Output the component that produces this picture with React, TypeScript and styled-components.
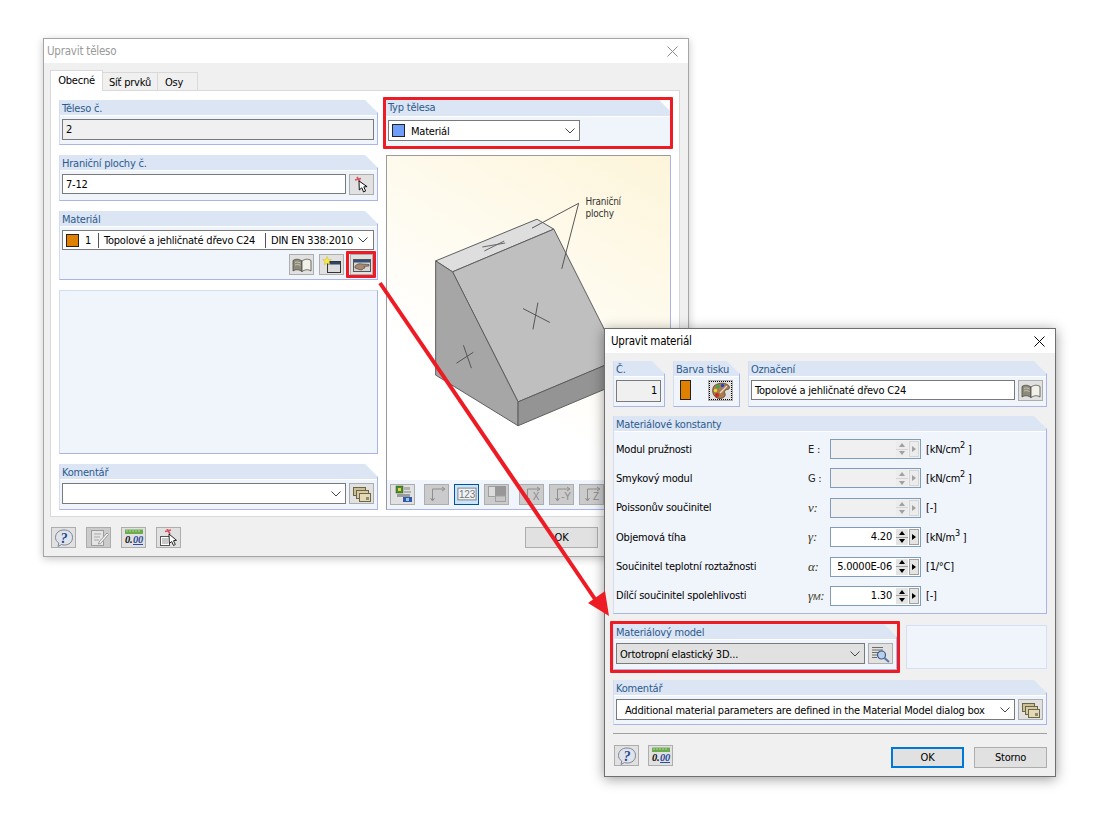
import React from "react";
import styled, { createGlobalStyle } from "styled-components";

const UI_FONT = `"DejaVu Sans Condensed", "DejaVu Sans", "Liberation Sans", sans-serif`;

const GlobalStyle = createGlobalStyle`
  html, body {
    margin: 0;
    padding: 0;
    background: #fff;
  }
  body {
    font-family: ${UI_FONT};
    font-stretch: condensed;
    font-size: 11px;
    letter-spacing: -0.22px;
    color: #000;
  }
`;

const Canvas = styled.div`
  position: relative;
  width: 1100px;
  height: 825px;
  overflow: hidden;
  background: #fff;
`;

const Window = styled.div<{ $x: number; $y: number; $w: number; $h: number; $active?: boolean }>`
  position: absolute;
  left: ${(p) => p.$x}px;
  top: ${(p) => p.$y}px;
  width: ${(p) => p.$w}px;
  height: ${(p) => p.$h}px;
  box-sizing: border-box;
  display: flex;
  flex-direction: column;
  background: #f0f0f0;
  border: 1px solid ${(p) => (p.$active ? "#6f6f6f" : "#a5a5a5")};
  box-shadow: ${(p) => (p.$active ? "0 2px 12px rgba(0,0,0,.4)" : "0 2px 8px rgba(0,0,0,.22)")};
`;

const TitleBar = styled.div<{ $active?: boolean }>`
  flex: none;
  height: 24px;
  display: flex;
  align-items: center;
  justify-content: space-between;
  padding: 0 10px 0 ${(p) => (p.$active ? 6 : 3)}px;
  background: #fff;
  color: ${(p) => (p.$active ? "#000" : "#9a9a9a")};
  font-size: 11.5px;
`;

const Tabs = styled.div`
  display: flex;
  height: 21px;
  margin: 7px 0 0 6px;
  align-items: flex-end;
`;

const Tab = styled.div<{ $on?: boolean; $w: number; $shift?: number }>`
  box-sizing: border-box;
  width: ${(p) => p.$w}px;
  height: ${(p) => (p.$on ? 21 : 19)}px;
  display: flex;
  align-items: center;
  justify-content: center;
  padding: ${(p) => (p.$on ? "0 0 1px" : "1px 0 0")};
  padding-right: ${(p) => p.$shift ?? 0}px;
  background: ${(p) => (p.$on ? "#fff" : "#f0f0f0")};
  border: 1px solid #d9d9d9;
  border-bottom: ${(p) => (p.$on ? "none" : "1px solid #d9d9d9")};
  border-left: ${(p) => (p.$on ? "1px solid #d9d9d9" : "none")};
  position: relative;
  z-index: ${(p) => (p.$on ? 1 : 0)};
`;

const TabPage = styled.div`
  box-sizing: border-box;
  width: 630px;
  height: 427px;
  margin: -1px 0 0 6px;
  padding: 9px 8px 0;
  display: grid;
  grid-template-columns: 319px 286px;
  column-gap: 7px;
  background: #fff;
  border: 1px solid #d9d9d9;
`;

const Col = styled.div`
  display: flex;
  flex-direction: column;
  gap: 10px;
`;

const RightCol = styled(Col)`
  margin-top: -1px;
  gap: 8px;
`;

const Panel = styled.div<{ $w?: number; $h?: number; $plain?: boolean }>`
  box-sizing: border-box;
  flex: none;
  width: ${(p) => (p.$w ? `${p.$w}px` : "auto")};
  height: ${(p) => (p.$h ? `${p.$h}px` : "auto")};
  display: flex;
  flex-direction: column;
  background: #f0f4fb;
  border-right: 1px solid #aab4e6;
  border-bottom: 1px solid #aab4e6;
  border-left: 1px solid #d4dcf2;
  ${(p) =>
    p.$plain
      ? "border-top: 1px solid #d4dcf2;"
      : "clip-path: polygon(0 0, calc(100% - 13px) 0, 100% 13px, 100% 100%, 0 100%);"}
`;

const SoftPanel = styled.div`
  box-sizing: border-box;
  width: 141px;
  height: 44px;
  margin-top: 1px;
  background: #f0f4fb;
  border: 1px solid #d5dff6;
`;

const PanelHead = styled.div<{ $h?: number }>`
  flex: none;
  box-sizing: border-box;
  height: ${(p) => (p.$h ?? 15) + 1}px;
  line-height: 15px;
  padding: 1px 0 0 2px;
  background: #dbe5f4;
  border-bottom: 1px solid #fff;
  color: #2c5a8e;
`;

const PanelBody = styled.div`
  flex: 1;
  display: flex;
  flex-direction: column;
  gap: 4px;
  padding: 3px 3px 4px 2px;
`;

const Row = styled.div`
  display: flex;
  align-items: flex-start;
  gap: 3px;
`;

const ActionRow = styled(Row)`
  justify-content: flex-end;
  gap: 5px;
  padding-right: 1px;
`;

const TextBox = styled.div<{ $ro?: boolean; $right?: boolean }>`
  box-sizing: border-box;
  flex: 1;
  min-width: 0;
  height: 20px;
  line-height: 19px;
  padding: 0 3px;
  overflow: hidden;
  white-space: nowrap;
  text-align: ${(p) => (p.$right ? "right" : "left")};
  background: ${(p) => (p.$ro ? "#f0f0f0" : "#fff")};
  border: 1px solid #7a7a7a;
`;

const Combo = styled.div<{ $w?: number; $gray?: boolean }>`
  box-sizing: border-box;
  flex: ${(p) => (p.$w ? "none" : "1")};
  width: ${(p) => (p.$w ? `${p.$w}px` : "auto")};
  min-width: 0;
  height: 21px;
  display: flex;
  align-items: center;
  padding-left: 3px;
  background: ${(p) => (p.$gray ? "#e1e1e1" : "#fff")};
  border: 1px solid #7a7a7a;
  white-space: nowrap;
  overflow: hidden;
`;

const ComboText = styled.span<{ $indent?: number }>`
  flex: 1;
  min-width: 0;
  overflow: hidden;
  padding: 1px 0 0 ${(p) => p.$indent ?? 0}px;
`;

const Swatch = styled.span<{ $color: string; $w?: number; $h?: number }>`
  flex: none;
  box-sizing: border-box;
  display: block;
  width: ${(p) => p.$w ?? 13}px;
  height: ${(p) => p.$h ?? 13}px;
  background: ${(p) => p.$color};
  border: 1px solid #222;
`;

const ComboCell = styled.span<{ $w: number }>`
  flex: none;
  box-sizing: border-box;
  width: ${(p) => p.$w}px;
  height: 15px;
  line-height: 16px;
  overflow: hidden;
  padding-left: 5px;
  border-left: 1px solid #555;
`;

const Num = styled.span`
  flex: none;
  width: 13px;
  margin-left: 6px;
  padding-top: 1px;
  text-align: left;
`;

const Chevron = styled.svg`
  flex: none;
  width: 10px;
  height: 6px;
  margin: 0 4px;
`;

const IconButton = styled.div<{ $w?: number; $h?: number; $tone?: "off" | "on" | "focus"; $gap?: number }>`
  flex: none;
  box-sizing: border-box;
  width: ${(p) => p.$w ?? 25}px;
  height: ${(p) => p.$h ?? 21}px;
  margin-left: ${(p) => p.$gap ?? 0}px;
  display: flex;
  align-items: center;
  justify-content: center;
  background: ${(p) => (p.$tone === "off" ? "#cbcbcb" : p.$tone === "on" ? "#cce4f7" : "#e1e1e1")};
  border: ${(p) => (p.$tone === "on" ? "1px solid #005499" : "1px solid #adadad")};
  outline: ${(p) => (p.$tone === "focus" ? "1px dotted #000" : "none")};
  outline-offset: -2px;
`;

const Highlight = styled.div<{ $inset: number }>`
  position: relative;
  flex: none;
  &::after {
    content: "";
    position: absolute;
    inset: ${(p) => p.$inset}px;
    border: 3px solid #ed1c24;
    border-radius: 1px;
    pointer-events: none;
  }
`;

const Preview = styled.div`
  height: 325px;
  box-sizing: border-box;
  margin: 0 0 -8px 1px;
  background: linear-gradient(30deg, #ffffff 30%, #fdf5da 100%);
  border-top: 1px solid #9a9a9a;
  border-left: 1px solid #9a9a9a;
  border-right: 1px solid #aab4e6;
`;

const PreviewSvg = styled.svg`
  display: block;
  width: 100%;
  height: 100%;
`;

const PreviewTools = styled.div`
  height: 30px;
  box-sizing: border-box;
  margin-left: 1px;
  display: flex;
  align-items: center;
  gap: 5px;
  padding: 0 0 1px 3px;
  background: #f0f4fb;
  border-bottom: 1px solid #aab4e6;
  border-left: 1px solid #9a9a9a;
  border-right: 1px solid #aab4e6;
`;

const BottomBar = styled.div`
  flex: 1;
  display: flex;
  align-items: flex-start;
  padding: 10px 0 0 7px;
  gap: 10px;
`;

const DialogButton = styled.div<{ $default?: boolean }>`
  box-sizing: border-box;
  width: 73px;
  height: 21px;
  display: flex;
  align-items: center;
  justify-content: center;
  background: #e1e1e1;
  border: ${(p) => (p.$default ? "2px solid #0078d7" : "1px solid #adadad")};
`;

const BehindOk = styled(DialogButton)`
  margin-left: 334px;
`;

const DialogBody = styled.div`
  flex: 1;
  display: flex;
  flex-direction: column;
  padding: 8px 8px 0;
`;

const TopRow = styled.div`
  display: flex;
  gap: 8px;
  height: 46px;
`;

const ColorRow = styled.div`
  display: flex;
  justify-content: space-between;
  padding: 0 3px 0 4px;
`;

const ConstGrid = styled.div`
  display: grid;
  grid-template-columns: 192px 22px 91px auto;
  grid-auto-rows: 20px;
  row-gap: 9.4px;
  align-items: center;
  padding: 7px 0 0 2px;
`;

const Symbol = styled.span`
  white-space: nowrap;
  color: #222;
`;

const GreekSym = styled.span`
  font-family: "Liberation Serif", serif;
  font-style: italic;
  font-size: 13px;
  color: #3a3a20;
`;

const Sub = styled.span`
  font-size: 9px;
  font-family: "Liberation Sans", sans-serif;
`;

const Sup = styled.sup`
  font-size: 9px;
  line-height: 0;
`;

const Unit = styled.span`
  padding-left: 5px;
  white-space: nowrap;
`;

const Spinner = styled.div<{ $off?: boolean }>`
  box-sizing: border-box;
  height: 20px;
  display: flex;
  align-items: stretch;
  padding: 1px;
  background: ${(p) => (p.$off ? "#f0f0f0" : "#fff")};
  border: 1px solid #7f9db9;
`;

const SpinValue = styled.span`
  flex: 1;
  min-width: 0;
  text-align: right;
  white-space: nowrap;
  padding-right: 4px;
  line-height: 16px;
`;

const SpinArrows = styled.span<{ $off?: boolean }>`
  flex: none;
  width: 12px;
  display: flex;
  flex-direction: column;
  gap: 1px;
  background: ${(p) => (p.$off ? "#d5d5d5" : "#a0a0a0")};
  color: ${(p) => (p.$off ? "#a0a0a0" : "#000")};
`;

const SpinCell = styled.span<{ $off?: boolean }>`
  flex: 1;
  background: ${(p) => (p.$off ? "#ececec" : "#e4e4e4")};
  display: flex;
  align-items: center;
  justify-content: center;
`;

const SpinNext = styled.span<{ $off?: boolean }>`
  flex: none;
  box-sizing: border-box;
  width: 10px;
  margin-left: 1px;
  display: flex;
  align-items: center;
  justify-content: center;
  background: ${(p) => (p.$off ? "#ececec" : "#e4e4e4")};
  border: 1px solid ${(p) => (p.$off ? "#d5d5d5" : "#a0a0a0")};
  color: ${(p) => (p.$off ? "#a0a0a0" : "#000")};
`;

const Tri = styled.svg`
  display: block;
  width: 6px;
  height: 6px;
  fill: currentColor;
`;

const ModelRow = styled.div`
  display: flex;
  gap: 9px;
  margin-top: 10px;
`;

const Separator = styled.div`
  height: 1px;
  margin-top: 8px;
  background: #a0a0a0;
`;

const DialogFooter = styled.div`
  display: flex;
  align-items: flex-start;
  gap: 9px;
  margin-top: 11px;
  padding-left: 1px;
`;

const FooterRight = styled.div`
  margin-left: auto;
  display: flex;
  gap: 10px;
  margin-top: 2px;
`;

const MarginWrap = styled.div<{ $top: number }>`
  margin-top: ${(p) => p.$top}px;
`;

const ArrowLayer = styled.svg`
  position: absolute;
  left: 0;
  top: 0;
  width: 1100px;
  height: 825px;
  pointer-events: none;
`;

const Ico = styled.svg`
  display: block;
  width: 20px;
  height: 18px;
`;

const CloseX = ({ color }: { color: string }) => (
  <svg width="11" height="11" viewBox="0 0 11 11">
    <path d="M.5.5l10 10M10.5.5l-10 10" stroke={color} strokeWidth="1" fill="none" />
  </svg>
);

const Down = () => (
  <Chevron viewBox="0 0 10 6">
    <path d="M.5.5L5 5 9.500.5" stroke="#444" fill="none" />
  </Chevron>
);

const BookIcon = () => (
  <Ico viewBox="0 0 20 18">
    <path d="M1 4.500C4 2.500 7 3 10 5v10.500C7 13.500 4 13 1 15z" fill="#8d8a7c" stroke="#4a4a44" strokeWidth=".8" />
    <path d="M19 4.500C16 2.500 13 3 10 5v10.500c3-2 6-2.500 9-.5z" fill="#f2f1e8" stroke="#4a4a44" strokeWidth=".8" />
    <path d="M3 6.500c2-.8 3.500-.5 5.500 .5M3 9c2-.8 3.500-.5 5.500 .5" stroke="#d9d6c6" strokeWidth=".8" fill="none" />
  </Ico>
);

const NewWindowIcon = () => (
  <Ico viewBox="0 0 20 18">
    <rect x="5.500" y="5.500" width="13" height="11" fill="#dcdcdc" stroke="#333" />
    <rect x="6" y="6" width="12" height="2.500" fill="#2b4468" />
    <path d="M5 .5l1.300 2.900 3.100.3-2.400 2 .8 3.100L5 7.100 2.200 8.800 3 5.700.6 3.700l3.100-.3z" fill="#f7e94a" stroke="#c9b93a" strokeWidth=".5" />
  </Ico>
);

const HandWindowIcon = () => (
  <Ico viewBox="0 0 20 18">
    <rect x="1.500" y="3.500" width="17" height="12" fill="#d6d6d6" stroke="#555" />
    <rect x="2" y="4" width="16" height="2.500" fill="#33507c" />
    <path d="M3 10c2.500-2.500 5-2.500 7-2l7 .5v1.500l-5 .5 1 1.500-2 .5-1 1.500-3-.5-4-1.500z" fill="#a88a72" stroke="#4d3a2a" strokeWidth=".6" />
  </Ico>
);

const PickIcon = () => (
  <Ico viewBox="0 0 20 18">
    <path d="M3 4l6-1.500M5 1l3 5" stroke="#d95060" strokeWidth="1.600" />
    <path d="M7 5l.3 9 2.500-2.200 1.800 4.200 2-1-1.800-4.100 3.300-.3z" fill="#fff" stroke="#111" strokeWidth="1" />
  </Ico>
);

const HelpIcon = () => (
  <Ico viewBox="0 0 20 18">
    <path d="M10 1c5 0 8.500 3 8.500 7.500S15 16 10.500 16c-1 0-2 0-3-.5L4 17.500l.8-3.500C2.500 12.500 1.500 10.500 1.500 8.500 1.500 4 5 1 10 1z" fill="#dfe3ec" stroke="#7f8596" />
    <text x="10" y="13.500" textAnchor="middle" fontFamily="Liberation Serif, serif" fontWeight="700" fontStyle="italic" fontSize="14" fill="#23468c">?</text>
  </Ico>
);

const NoteIcon = () => (
  <Ico viewBox="0 0 20 18">
    <rect x="2.500" y="1.500" width="12" height="15" fill="#e4e4e4" stroke="#9c9c9c" />
    <path d="M5 5h7M5 8h6M5 11h5" stroke="#a9a9a9" />
    <path d="M10 13l8-9 1.500 1.500-8 9-2 .5z" fill="#f2f2f2" stroke="#9c9c9c" />
  </Ico>
);

const DecimalIcon = () => (
  <Ico viewBox="0 0 20 18">
    <rect x="1" y="0.500" width="18" height="4.500" fill="#6cab4e" />
    <path d="M3 1v2M6 1v2M9 1v2M12 1v2M15 1v2" stroke="#c6e0b6" strokeWidth=".8" />
    <text x="1" y="13.500" fontFamily="Liberation Serif, serif" fontWeight="700" fontStyle="italic" fontSize="10.500" fill="#111">0.</text>
    <text x="9" y="13.500" fontFamily="Liberation Serif, serif" fontWeight="700" fontStyle="italic" fontSize="10.500" fill="#2a4a9c">00</text>
    <path d="M9 15.500h10" stroke="#2a4a9c" />
  </Ico>
);

const ListPickIcon = () => (
  <Ico viewBox="0 0 20 18">
    <rect x="1.500" y="7.500" width="9" height="9" fill="#fff" stroke="#555" />
    <path d="M3 10h6M3 12h6M3 14h6" stroke="#777" strokeWidth=".8" />
    <path d="M6 2.500l6-1.500M8 0l3 5" stroke="#d95060" strokeWidth="1.600" />
    <path d="M10 5l.3 9.500 2.400-2 1.800 4 1.800-1-1.800-3.800 3-.4z" fill="#fff" stroke="#111" strokeWidth=".9" />
  </Ico>
);

const PaletteIcon = () => (
  <Ico viewBox="0 0 20 18">
    <path d="M3 4c3-3 10-4 14-1 2 1.500 2 4-.5 4.500-3 .5-3.500 2-2.500 4 1 2.500-1.500 5-5 5C3 16.500-.5 9.500 3 4z" fill="#a87c4c" stroke="#4a3320" strokeWidth=".7" />
    <circle cx="7" cy="4.500" r="1.700" fill="#2fae3a" />
    <circle cx="11.500" cy="3.500" r="1.700" fill="#2a3fd0" />
    <circle cx="4.500" cy="8.500" r="1.700" fill="#e6d92e" />
    <circle cx="6" cy="13" r="2" fill="#d8231f" />
    <path d="M9 11l7-7" stroke="#ddd" strokeWidth="1.200" />
  </Ico>
);

const StackIcon = () => (
  <Ico viewBox="0 0 20 18">
    <rect x="1.500" y="2.500" width="12" height="8" fill="#cdbf94" stroke="#6a6448" />
    <rect x="4.500" y="5.500" width="12" height="8" fill="#d8cba2" stroke="#6a6448" />
    <rect x="7.500" y="8.500" width="11" height="8" fill="#e4d9b6" stroke="#6a6448" />
    <rect x="14" y="12" width="3" height="3" fill="#8e8a6a" />
  </Ico>
);

const ZoomListIcon = () => (
  <Ico viewBox="0 0 20 18">
    <path d="M1 2.500h11M1 5h11M1 7.500h7M1 10h5M1 12.500h5" stroke="#6a6a6a" />
    <circle cx="10.500" cy="10" r="4" fill="#b8cfe8" stroke="#3a5c92" strokeWidth="1.200" />
    <path d="M13.500 13l4.500 4" stroke="#5a78ac" strokeWidth="2.200" />
  </Ico>
);

const ViewsIcon = () => (
  <Ico viewBox="0 0 20 18">
    <rect x="3" y="1" width="7" height="7" fill="#4a8a34" stroke="#2c5a1e" strokeWidth=".5" />
    <rect x="5" y="3" width="3" height="3" fill="#e8d23a" />
    <path d="M11 2h6v3h-6zM11 6h7v2h-7z" fill="#9c9c9c" opacity=".7" />
    <path d="M4 9h13v3H4z" fill="#7d7d7d" opacity=".7" />
    <path d="M10 12h9v5h-9z" fill="#2f5aa8" />
    <path d="M13 13h3v3h-3z" fill="#9dc0ea" />
  </Ico>
);

const AxisIcon = ({ label }: { label?: string }) => (
  <Ico viewBox="0 0 20 18">
    <path d="M5.500 4v11M3.500 13l2 3 2-3M5.500 4H17M15 2l3 2-3 2" stroke="#8e8e8e" strokeWidth="1" fill="none" />
    {label && (
      <text x="14" y="15" textAnchor="middle" fontSize="10" fontFamily="Liberation Sans, sans-serif" fill="#8a8a8a">
        {label}
      </text>
    )}
  </Ico>
);

const NumbersIcon = () => (
  <Ico viewBox="0 0 22 18">
    <rect x="1" y="2.500" width="20" height="13" fill="#eef3f8" stroke="#7a7a7a" />
    <text x="11" y="13" textAnchor="middle" fontSize="11" fontFamily="Liberation Sans, sans-serif" fill="#777">123</text>
  </Ico>
);

const PlanesIcon = () => (
  <Ico viewBox="0 0 20 18">
    <rect x="1.500" y="1.500" width="11" height="10" fill="#dcdcdc" stroke="#a0a0a0" />
    <rect x="8" y="1" width="11" height="10" fill="#979797" />
    <rect x="8.500" y="11" width="10" height="5.500" fill="#c6c6c6" stroke="#a0a0a0" />
  </Ico>
);

const Solid = () => (
  <PreviewSvg viewBox="386 155 285 325">
    <path d="M435 260L537 218 554 228 452 271z" fill="#dedede" stroke="#5e5e5e" />
    <path d="M452 271L554 228 620 359 518 402z" fill="#bfbfbf" stroke="#5e5e5e" />
    <path d="M435 260L452 271 518 402V426L435 375z" fill="#a6a6a6" stroke="#5e5e5e" />
    <path d="M518 402L620 359V383L518 426z" fill="#949494" stroke="#5e5e5e" />
    <path d="M482 246L505 242M484 250L504 240" stroke="#666" fill="none" />
    <path d="M538 302L533 329M523 308L550 322" stroke="#555" fill="none" />
    <path d="M463 345L471 368M456 363L473 352" stroke="#555" fill="none" />
    <path d="M532 227L579 202 562 268" stroke="#555" fill="none" />
    <text x="586" y="204" fontSize="10" fill="#333">Hraniční</text>
    <text x="586" y="216" fontSize="10" fill="#333">plochy</text>
  </PreviewSvg>
);

const constants = [
  { label: "Modul pružnosti", sym: <Symbol>E :</Symbol>, unit: <>[kN/cm<Sup>2</Sup> ]</>, off: true },
  { label: "Smykový modul", sym: <Symbol>G :</Symbol>, unit: <>[kN/cm<Sup>2</Sup> ]</>, off: true },
  { label: "Poissonův součinitel", sym: <GreekSym>ν:</GreekSym>, unit: "[-]", off: true },
  { label: "Objemová tíha", sym: <GreekSym>γ:</GreekSym>, value: "4.20", unit: <>[kN/m<Sup>3</Sup> ]</> },
  { label: "Součinitel teplotní roztažnosti", sym: <GreekSym>α:</GreekSym>, value: "5.0000E-06", unit: "[1/°C]" },
  { label: "Dílčí součinitel spolehlivosti", sym: <GreekSym>γ<Sub>M</Sub>:</GreekSym>, value: "1.30", unit: "[-]" },
];

const App = () => {
  return (
    <Canvas>
      <GlobalStyle />

      <Window $x={43} $y={38} $w={646} $h={519}>
        <TitleBar>
          Upravit těleso
          <CloseX color="#8a8a8a" />
        </TitleBar>
        <Tabs>
          <Tab $on $w={53}>Obecné</Tab>
          <Tab $w={55}>Síť prvků</Tab>
          <Tab $w={40} $shift={7}>Osy</Tab>
        </Tabs>
        <TabPage>
          <Col>
            <Panel $h={45}>
              <PanelHead>Těleso č.</PanelHead>
              <PanelBody>
                <TextBox $ro>2</TextBox>
              </PanelBody>
            </Panel>
            <Panel $h={46}>
              <PanelHead>Hraniční plochy č.</PanelHead>
              <PanelBody>
                <Row>
                  <TextBox>7-12</TextBox>
                  <IconButton><PickIcon /></IconButton>
                </Row>
              </PanelBody>
            </Panel>
            <Panel $h={69}>
              <PanelHead>Materiál</PanelHead>
              <PanelBody>
                <Combo>
                  <Swatch $color="#e08000" />
                  <Num>1</Num>
                  <ComboCell $w={167}>Topolové a jehličnaté dřevo C24</ComboCell>
                  <ComboCell $w={89}>DIN EN 338:2010</ComboCell>
                  <Down />
                </Combo>
                <ActionRow>
                  <IconButton><BookIcon /></IconButton>
                  <IconButton><NewWindowIcon /></IconButton>
                  <Highlight $inset={-3}>
                    <IconButton $w={23} $gap={1}><HandWindowIcon /></IconButton>
                  </Highlight>
                </ActionRow>
              </PanelBody>
            </Panel>
            <Panel $plain $h={164} />
            <Panel $h={46}>
              <PanelHead>Komentář</PanelHead>
              <PanelBody>
                <Row>
                  <Combo><ComboText /><Down /></Combo>
                  <IconButton><StackIcon /></IconButton>
                </Row>
              </PanelBody>
            </Panel>
          </Col>
          <RightCol>
            <Highlight $inset={-2}>
              <Panel $h={48}>
                <PanelHead $h={17}>Typ tělesa</PanelHead>
                <PanelBody>
                  <Combo $w={192}>
                    <Swatch $color="#6f9dfa" />
                    <ComboText $indent={6}>Materiál</ComboText>
                    <Down />
                  </Combo>
                </PanelBody>
              </Panel>
            </Highlight>
            <Preview><Solid /></Preview>
            <PreviewTools>
              <IconButton><ViewsIcon /></IconButton>
              <IconButton $tone="off" $gap={4}><AxisIcon /></IconButton>
              <IconButton $tone="on"><NumbersIcon /></IconButton>
              <IconButton $tone="off"><PlanesIcon /></IconButton>
              <IconButton $tone="off" $gap={5}><AxisIcon label="X" /></IconButton>
              <IconButton $tone="off"><AxisIcon label="-Y" /></IconButton>
              <IconButton $tone="off"><AxisIcon label="Z" /></IconButton>
            </PreviewTools>
          </RightCol>
        </TabPage>
        <BottomBar>
          <IconButton><HelpIcon /></IconButton>
          <IconButton $tone="off"><NoteIcon /></IconButton>
          <IconButton><DecimalIcon /></IconButton>
          <IconButton><ListPickIcon /></IconButton>
          <BehindOk>OK</BehindOk>
        </BottomBar>
      </Window>

      <Window $x={604} $y={328} $w={452} $h={449} $active>
        <TitleBar $active>
          Upravit materiál
          <CloseX color="#000" />
        </TitleBar>
        <DialogBody>
          <TopRow>
            <Panel $w={52} $h={46}>
              <PanelHead>Č.</PanelHead>
              <PanelBody>
                <TextBox $ro $right>1</TextBox>
              </PanelBody>
            </Panel>
            <Panel $w={67} $h={46}>
              <PanelHead>Barva tisku</PanelHead>
              <PanelBody>
                <ColorRow>
                  <Swatch $color="#e08000" $w={11} $h={20} />
                  <IconButton $tone="focus"><PaletteIcon /></IconButton>
                </ColorRow>
              </PanelBody>
            </Panel>
            <Panel $w={299} $h={46}>
              <PanelHead>Označení</PanelHead>
              <PanelBody>
                <Row>
                  <TextBox>Topolové a jehličnaté dřevo C24</TextBox>
                  <IconButton><BookIcon /></IconButton>
                </Row>
              </PanelBody>
            </Panel>
          </TopRow>
          <MarginWrap $top={9}>
            <Panel $h={198}>
              <PanelHead>Materiálové konstanty</PanelHead>
              <ConstGrid>
                {constants.map((c) => (
                  <React.Fragment key={c.label}>
                    <span>{c.label}</span>
                    {c.sym}
                    <Spinner $off={c.off}>
                      <SpinValue>{c.value}</SpinValue>
                      <SpinArrows $off={c.off}>
                        <SpinCell $off={c.off}>
                          <Tri viewBox="0 0 6 6"><path d="M3 1l3 4H0z" /></Tri>
                        </SpinCell>
                        <SpinCell $off={c.off}>
                          <Tri viewBox="0 0 6 6"><path d="M3 5L0 1h6z" /></Tri>
                        </SpinCell>
                      </SpinArrows>
                      <SpinNext $off={c.off}>
                        <Tri viewBox="0 0 6 6"><path d="M1 0l4 3-4 3z" /></Tri>
                      </SpinNext>
                    </Spinner>
                    <Unit>{c.unit}</Unit>
                  </React.Fragment>
                ))}
              </ConstGrid>
            </Panel>
          </MarginWrap>
          <ModelRow>
            <Highlight $inset={-3}>
              <Panel $w={284} $h={46}>
                <PanelHead>Materiálový model</PanelHead>
                <PanelBody>
                  <Row>
                    <Combo $gray><ComboText>Ortotropní elastický 3D...</ComboText><Down /></Combo>
                    <IconButton><ZoomListIcon /></IconButton>
                  </Row>
                </PanelBody>
              </Panel>
            </Highlight>
            <SoftPanel />
          </ModelRow>
          <MarginWrap $top={10}>
            <Panel $h={45}>
              <PanelHead>Komentář</PanelHead>
              <PanelBody>
                <Row>
                  <Combo>
                    <ComboText $indent={5}>Additional material parameters are defined in the Material Model dialog box</ComboText>
                    <Down />
                  </Combo>
                  <IconButton><StackIcon /></IconButton>
                </Row>
              </PanelBody>
            </Panel>
          </MarginWrap>
          <Separator />
          <DialogFooter>
            <IconButton><HelpIcon /></IconButton>
            <IconButton><DecimalIcon /></IconButton>
            <FooterRight>
              <DialogButton $default>OK</DialogButton>
              <DialogButton>Storno</DialogButton>
            </FooterRight>
          </DialogFooter>
        </DialogBody>
      </Window>

      <ArrowLayer viewBox="0 0 1100 825">
        <path d="M380 283L597 602" stroke="#ed1c24" strokeWidth="4" fill="none" />
        <path d="M609 616L588 603 605 591z" fill="#ed1c24" />
      </ArrowLayer>
    </Canvas>
  );
};

export default App;
